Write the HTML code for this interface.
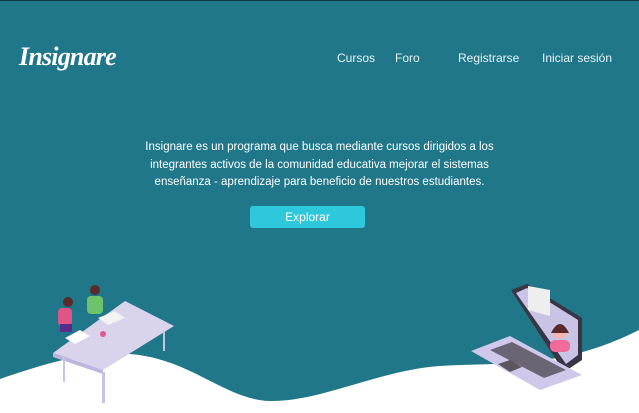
<!DOCTYPE html>
<html><head><meta charset="utf-8"><style>
body{margin:0;width:639px;height:413px;overflow:hidden;background:#20778a;font-family:"Liberation Sans",sans-serif;position:relative}
.top{position:absolute;left:0;top:0;width:639px;height:1px;background:#0e3a44}
.logo{position:absolute;left:19px;top:42px;color:#fff;font-family:"Liberation Serif",serif;font-style:italic;font-weight:bold;font-size:26px;letter-spacing:-0.8px}
.nav{position:absolute;top:51px;color:#e8f3f5;font-size:12px}
.txt{position:absolute;left:127px;width:385px;top:139px;text-align:center;color:#fff;font-size:11.5px;line-height:17.5px}
.btn{position:absolute;left:250px;top:206px;width:115px;height:22px;background:#2ec8dc;border-radius:3px;color:#fff;font-size:12px;text-align:center;line-height:22px}
svg{position:absolute;left:0;top:0}
</style></head><body>
<div class="top"></div>
<div class="logo">Insignare</div>
<div class="nav" style="left:337px">Cursos</div>
<div class="nav" style="left:395px">Foro</div>
<div class="nav" style="left:458px">Registrarse</div>
<div class="nav" style="left:542px">Iniciar sesión</div>
<div class="txt">Insignare es un programa que busca mediante cursos dirigidos a los integrantes activos de la comunidad educativa mejorar el sistemas enseñanza - aprendizaje para beneficio de nuestros estudiantes.</div>
<div class="btn">Explorar</div>
<svg width="639" height="413">
<path d="M0 379 C50 362 100 346 150 357 C200 368 230 400 270 401 C320 402 380 370 440 366 C500 362 560 370 639 330 L639 413 L0 413Z" fill="#fff"/>
<polygon points="53,353 125,301 174,326 103,370" fill="#d9d4ec"/>
<polygon points="53,353 103,370 103,374 53,357" fill="#bcb5dd"/>
<rect x="63" y="357" width="2" height="25" fill="#c8c2e4"/>
<rect x="102" y="372" width="3" height="31" fill="#c8c2e4"/>
<rect x="163" y="331" width="2" height="20" fill="#c8c2e4"/>
<polygon points="65,338 80,330 90,336 75,344" fill="#fff"/>
<polygon points="98,318 115,311 125,318 108,325" fill="#f3f3f3"/>
<circle cx="103" cy="334" r="3" fill="#e05a8c"/>
<circle cx="68" cy="302" r="5" fill="#5b2a2a"/>
<rect x="58" y="308" width="14" height="18" rx="4" fill="#e0548a"/>
<rect x="60" y="324" width="12" height="8" fill="#5a2c8e"/>
<circle cx="95" cy="290" r="5" fill="#5b2a2a"/>
<rect x="87" y="296" width="16" height="18" rx="4" fill="#6cc36a"/>
<polygon points="511,290 527,284 582,318 582,360 564,372" fill="#3a3545"/>
<polygon points="516,293 527,288 578,320 578,355 566,364" fill="#c9c3e6"/>
<polygon points="528,286 550,290 550,316 528,310" fill="#eeeeee"/>
<circle cx="560" cy="332" r="7" fill="#f3b6b0"/>
<path d="M551 333 Q560 315 569 333 Z" fill="#5a2a2a"/>
<rect x="550" y="340" width="20" height="12" rx="5" fill="#f06a9a"/>
<polygon points="471,351 510,336 582,375 540,390" fill="#cfc8ea"/>
<polygon points="490,350 512,342 566,370 544,378" fill="#6b6474"/>
<polygon points="498,364 510,360 522,367 510,372" fill="#5c5560"/>
</svg>
</body></html>
